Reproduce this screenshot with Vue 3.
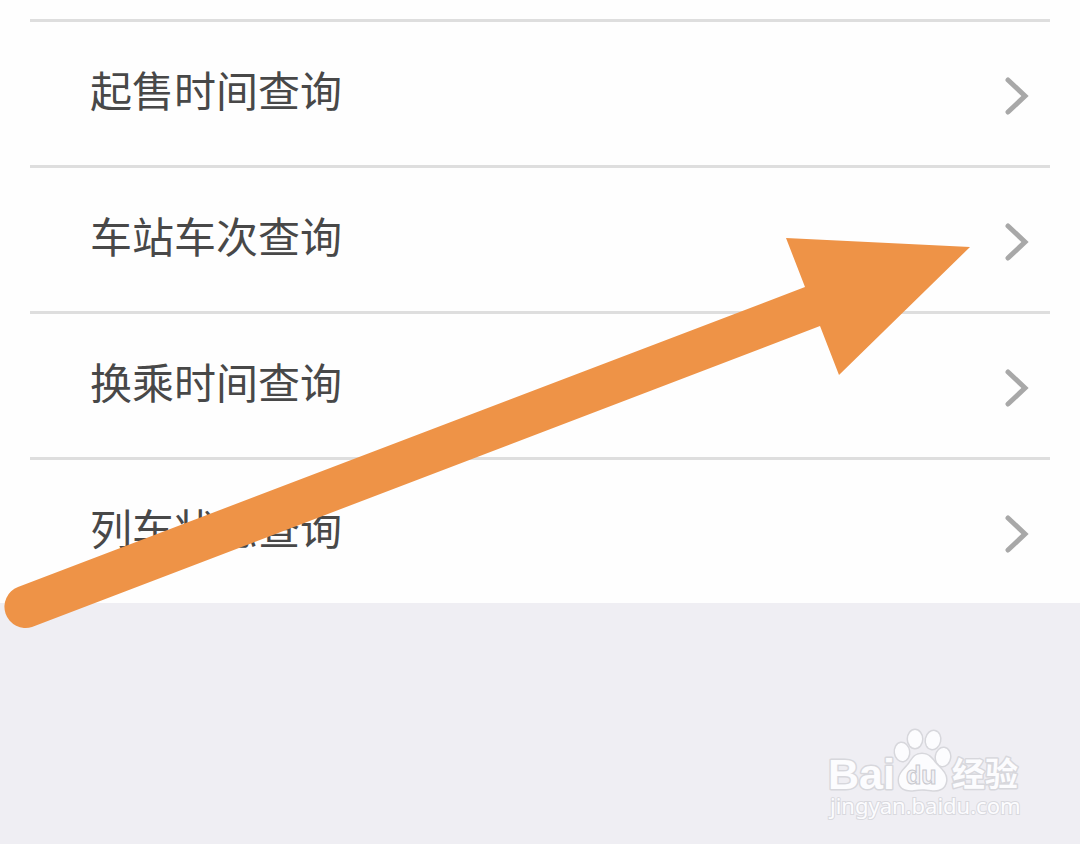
<script setup>
const items = ['起售时间查询', '车站车次查询', '换乘时间查询', '列车状态查询']
</script>

<template>
  <main class="page">
    <nav class="menu">
      <a v-for="item in items" :key="item" class="row" href="#">
        <span class="label">{{ item }}</span>
        <svg class="chevron" viewBox="0 0 24 40" aria-hidden="true">
          <path d="M3 4 L20 20 L3 36" />
        </svg>
      </a>
    </nav>
    <footer class="footer">
      <svg class="mark" viewBox="0 0 200 100" role="img" aria-label="Baidu 经验">
        <g class="shape">
          <text class="brand" x="0" y="63">Bai</text>
          <ellipse cx="74" cy="26" rx="7" ry="9" transform="rotate(-8 74 26)" />
          <ellipse cx="87" cy="13" rx="7" ry="9" />
          <ellipse cx="105" cy="14" rx="7" ry="9" transform="rotate(12 105 14)" />
          <ellipse cx="115" cy="31" rx="7" ry="9" transform="rotate(8 115 31)" />
          <path d="M94 28 C101 28 104 33 108 38 C113 43 119 48 118 55 C117 63 110 65 103 64 C96 63 92 63 86 64 C77 65 71 62 71 54 C71 47 77 43 81 38 C85 32 87 28 94 28 Z" />
          <text class="cn" x="124" y="60">经验</text>
        </g>
        <text class="du" x="78" y="58">du</text>
        <text class="url" x="2" y="88">jingyan.baidu.com</text>
      </svg>
    </footer>
    <svg class="arrow" viewBox="0 0 1080 640" aria-hidden="true">
      <path d="M18 587 L805 287 L786 238 L970 247 L839 375 L820 326 L32 627 A21.200 21.200 0 0 1 18 587 Z" />
    </svg>
  </main>
</template>

<style>
body {
  margin: 0;
  background: #efeef3;
}
</style>

<style scoped>
.page {
  position: relative;
  min-height: 100vh;
  display: flex;
  flex-direction: column;
  overflow: hidden;
  background: #efeef3;
  font-family: "Liberation Sans", "Noto Sans CJK SC", sans-serif;
}
.menu {
  padding: 19px 30px 0;
  background: #fefefe;
}
.row {
  box-sizing: border-box;
  min-height: 146px;
  display: flex;
  align-items: center;
  justify-content: space-between;
  padding: 4px 21px 0 60px;
  border-top: 3px solid #dedede;
  color: #484848;
  text-decoration: none;
}
.label {
  font-family: "Noto Sans CJK SC", sans-serif;
  font-size: 42px;
  line-height: 60px;
  padding-bottom: 14px;
}
.chevron {
  width: 24px;
  height: 40px;
  fill: none;
  stroke: #a8a8a8;
  stroke-width: 5;
  stroke-linecap: round;
}
.footer {
  flex: 1;
  display: flex;
  justify-content: flex-end;
  align-items: flex-end;
  padding: 0 52px 18px 0;
}
.mark {
  width: 200px;
  height: 100px;
  overflow: visible;
}
.shape {
  fill: #fcfcfe;
  stroke: #d7d7dc;
  stroke-width: 3;
  paint-order: stroke;
  stroke-linejoin: round;
}
.brand {
  font-size: 43px;
  font-weight: 700;
}
.cn {
  font-family: "Noto Sans CJK SC", sans-serif;
  font-size: 33px;
  font-weight: 700;
}
.du {
  font-size: 25px;
  font-weight: 700;
  fill: #f2f2f6;
  stroke: #c8c8ce;
  stroke-width: 1;
}
.url {
  font-family: "Noto Sans", sans-serif;
  font-size: 22px;
  fill: #fcfcfe;
  stroke: #d9d9de;
  stroke-width: 2;
  paint-order: stroke;
}
.arrow {
  position: absolute;
  top: 0;
  left: 0;
  width: 1080px;
  height: 640px;
  fill: #ee9347;
  pointer-events: none;
}
</style>
